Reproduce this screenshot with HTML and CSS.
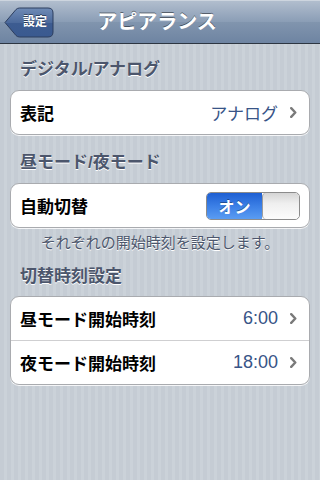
FILE: index.html
```html
<!DOCTYPE html>
<html lang="ja">
<head>
<meta charset="utf-8">
<link rel="stylesheet" href="styles.css">
</head>
<body>
<div class="screen">
  <header class="nav">
    <div class="back">
      <svg class="back-shape" width="50" height="31" viewBox="0 0 50 31">
        <defs>
          <linearGradient id="bg" x1="0" y1="0" x2="0" y2="1">
            <stop offset="0" stop-color="#6f8bb6"/>
            <stop offset="0.5" stop-color="#4c6a9c"/>
            <stop offset="0.51" stop-color="#3d5c91"/>
            <stop offset="1" stop-color="#3a5a90"/>
          </linearGradient>
        </defs>
        <path d="M1 15.5 L12 2.5 Q13.5 1 15.5 1 L44 1 Q49 1 49 6 L49 25 Q49 30 44 30 L15.5 30 Q13.5 30 12 28.5 Z" fill="url(#bg)" stroke="#2d3e5e" stroke-width="1"/>
      </svg>
      <span class="back-label">設定</span>
    </div>
    <h1 class="title">アピアランス</h1>
    <div class="nav-spacer"></div>
  </header>

  <main class="content">
    <h2 class="sec-head first">デジタル/アナログ</h2>
    <div class="group">
      <div class="row">
        <span class="label">表記</span>
        <span class="value">アナログ</span>
        <svg class="chev" width="7" height="11" viewBox="0 0 7 11"><path d="M1.2 1.2 L5.3 5.5 L1.2 9.8" fill="none" stroke="#7a7a7a" stroke-width="2.4" stroke-linecap="round" stroke-linejoin="round"/></svg>
      </div>
    </div>

    <h2 class="sec-head">昼モード/夜モード</h2>
    <div class="group">
      <div class="row">
        <span class="label">自動切替</span>
        <div class="switch">
          <span class="switch-on">オン</span>
          <span class="switch-knob"></span>
        </div>
      </div>
    </div>
    <p class="sec-foot">それぞれの開始時刻を設定します。</p>

    <h2 class="sec-head third">切替時刻設定</h2>
    <div class="group">
      <div class="row">
        <span class="label">昼モード開始時刻</span>
        <span class="value num">6:00</span>
        <svg class="chev" width="7" height="11" viewBox="0 0 7 11"><path d="M1.2 1.2 L5.3 5.5 L1.2 9.8" fill="none" stroke="#7a7a7a" stroke-width="2.4" stroke-linecap="round" stroke-linejoin="round"/></svg>
      </div>
      <div class="row divided">
        <span class="label">夜モード開始時刻</span>
        <span class="value num">18:00</span>
        <svg class="chev" width="7" height="11" viewBox="0 0 7 11"><path d="M1.2 1.2 L5.3 5.5 L1.2 9.8" fill="none" stroke="#7a7a7a" stroke-width="2.4" stroke-linecap="round" stroke-linejoin="round"/></svg>
      </div>
    </div>
  </main>
</div>
</body>
</html>
```
FILE: styles.css
```css
* { box-sizing: border-box; }
html, body {
  margin: 0;
  padding: 0;
  width: 320px;
  height: 480px;
  overflow: hidden;
}
body {
  font-family: "Liberation Sans", "Noto Sans CJK JP", sans-serif;
}
.screen {
  width: 320px;
  height: 480px;
  display: flex;
  flex-direction: column;
  background-color: #c5ccd4;
  background-image: repeating-linear-gradient(to right, #c5ccd4 0, #c5ccd4 4px, #cbd2d9 4px, #cbd2d9 7px);
}
.nav {
  height: 44px;
  flex: none;
  display: grid;
  grid-template-columns: 60px 1fr 60px;
  align-items: center;
  background: linear-gradient(to bottom, #b3bfcf 0%, #8b9eb6 50%, #8195ae 51%, #6e84a2 100%);
  border-bottom: 1px solid #2d3642;
  box-shadow: inset 0 1px 0 #cdd5df;
}
.back {
  position: relative;
  width: 50px;
  height: 31px;
  margin-left: 4px;
  margin-top: 0px;
}
.back-shape {
  position: absolute;
  left: 0;
  top: 0;
}
.back-label {
  position: absolute;
  left: 13px;
  right: 1px;
  top: 0;
  height: 31px;
  line-height: 30px;
  text-align: center;
  color: #fff;
  font-size: 12px;
  font-weight: bold;
  text-shadow: 0 -1px 0 rgba(0,0,0,0.45);
}
.title {
  margin: 0;
  padding-right: 6px;
  text-align: center;
  color: #fff;
  font-size: 20px;
  font-weight: bold;
  line-height: 44px;
  text-shadow: 0 -1px 0 rgba(0,0,0,0.45);
}
.content {
  padding: 0 10px;
}
.sec-head {
  margin: 0;
  padding: 18px 10px 10px;
  font-size: 17px;
  line-height: 20px;
  font-weight: bold;
  color: #4c566c;
  text-shadow: 0 1px 0 #fff;
}
.sec-head.first {
  padding-top: 16px;
  padding-bottom: 10px;
}
.sec-head.third {
  padding-top: 15px;
  padding-bottom: 9px;
}
.group {
  background: #fff;
  border: 1px solid #a9abaf;
  border-radius: 9px;
  box-shadow: 0 1px 0 rgba(255,255,255,0.8);
  overflow: hidden;
}
.row {
  height: 43px;
  display: flex;
  align-items: center;
  padding: 0 12px 0 9px;
}
.row.divided {
  border-top: 1px solid #cfcfd1;
  height: 44px;
}
.label {
  flex: 1;
  font-size: 17px;
  font-weight: bold;
  color: #000;
}
.value {
  font-size: 17px;
  color: #385487;
  margin-right: 12px;
}
.value.num {
  font-size: 18px;
}
.chev {
  display: block;
}
.switch {
  width: 94px;
  height: 28px;
  display: flex;
  margin-right: -3px;
  border: 1px solid #8b8b8b;
  border-radius: 5px;
  overflow: hidden;
}
.switch-on {
  width: 55px;
  display: flex;
  align-items: center;
  justify-content: center;
  color: #fff;
  font-size: 16px;
  font-weight: bold;
  text-shadow: 0 -1px 0 rgba(0,0,0,0.35);
  background: linear-gradient(to bottom, #1e5fd2 0%, #3b7fe6 50%, #5a9cf2 100%);
}
.switch-knob {
  flex: 1;
  border-left: 1px solid #9c9c9c;
  border-radius: 4px;
  background: linear-gradient(to bottom, #d5d5d5 0%, #efefef 40%, #fcfcfc 100%);
}
.sec-foot {
  margin: 0;
  padding: 6px 10px 0;
  text-align: center;
  font-size: 15px;
  line-height: 18px;
  color: #4c566c;
  text-shadow: 0 1px 0 #fff;
}
```
